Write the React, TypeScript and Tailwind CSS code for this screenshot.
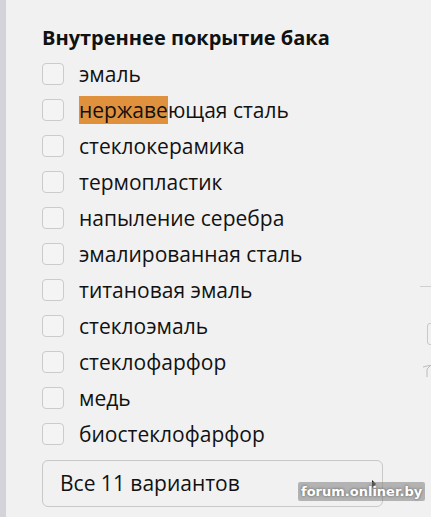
import React from 'react';

const options = [
  'эмаль',
  'нержавеющая сталь',
  'стеклокерамика',
  'термопластик',
  'напыление серебра',
  'эмалированная сталь',
  'титановая эмаль',
  'стеклоэмаль',
  'стеклофарфор',
  'медь',
  'биостеклофарфор',
];

const Label: React.FC<{ text: string }> = ({ text }) => {
  if (text === 'нержавеющая сталь') {
    return (
      <span>
        <span className="bg-[#e0913e]">нержаве</span>ющая сталь
      </span>
    );
  }
  return <span>{text}</span>;
};

export default function App() {
  return (
    <div
      className="relative flex w-[431px] h-[517px] overflow-hidden bg-[#f1f1f1] text-[#111]"
      style={{ fontFamily: '"Open Sans", "Noto Sans", sans-serif' }}
    >
      <div className="w-[6px] shrink-0 bg-[#d4d3d9]" />
      <div className="flex-1 pl-[36px] pt-[24px]">
        <h3 className="text-[20px] font-bold leading-[28px] text-[#111]">Внутреннее покрытие бака</h3>
        <ul className="mt-[4px] flex flex-col">
          {options.map(o => (
            <li key={o} className="flex h-[36px] items-center">
              <span className="h-[22px] w-[22px] shrink-0 rounded-[4px] border border-[#cbcbcb] bg-[#f4f4f4]" />
              <span className="ml-[15px] text-[21px] leading-[26px]">
                <Label text={o} />
              </span>
            </li>
          ))}
        </ul>
        <button className="mt-[8px] flex h-[47px] w-[341px] items-center justify-between rounded-[6px] border border-[#c8c8c8] pl-[17px] pr-[6px] text-[21px]">
          <span>Все 11 вариантов</span>
          <span className="h-0 w-0 border-y-[4px] border-l-[4px] border-y-transparent border-l-[#111]" />
        </button>
      </div>

      {/* cut-off controls at right edge */}
      <div className="absolute left-[420px] top-[286px] h-px w-[11px] bg-[#cfcfcf]" />
      <div className="absolute left-[427px] top-[323px] h-[22px] w-[10px] rounded-[3px] border border-[#c8c8c8]" />
      <svg className="absolute left-[423px] top-[365px]" width="8" height="14" viewBox="0 0 8 14">
        <path d="M0 2 L8 0 M8 0 L4 4 L4 12" stroke="#bbb" strokeWidth="1" fill="none" />
      </svg>

      {/* watermark */}
      <div className="absolute left-[298px] top-[482px] rounded-[2px] bg-[#8a8a8a]/60 px-[3px] text-[13px] font-bold leading-[19px] text-white [text-shadow:0_0_3px_#555]"
        style={{ fontFamily: '"DejaVu Sans", sans-serif' }}>
        forum.onliner.by
      </div>
    </div>
  );
}
